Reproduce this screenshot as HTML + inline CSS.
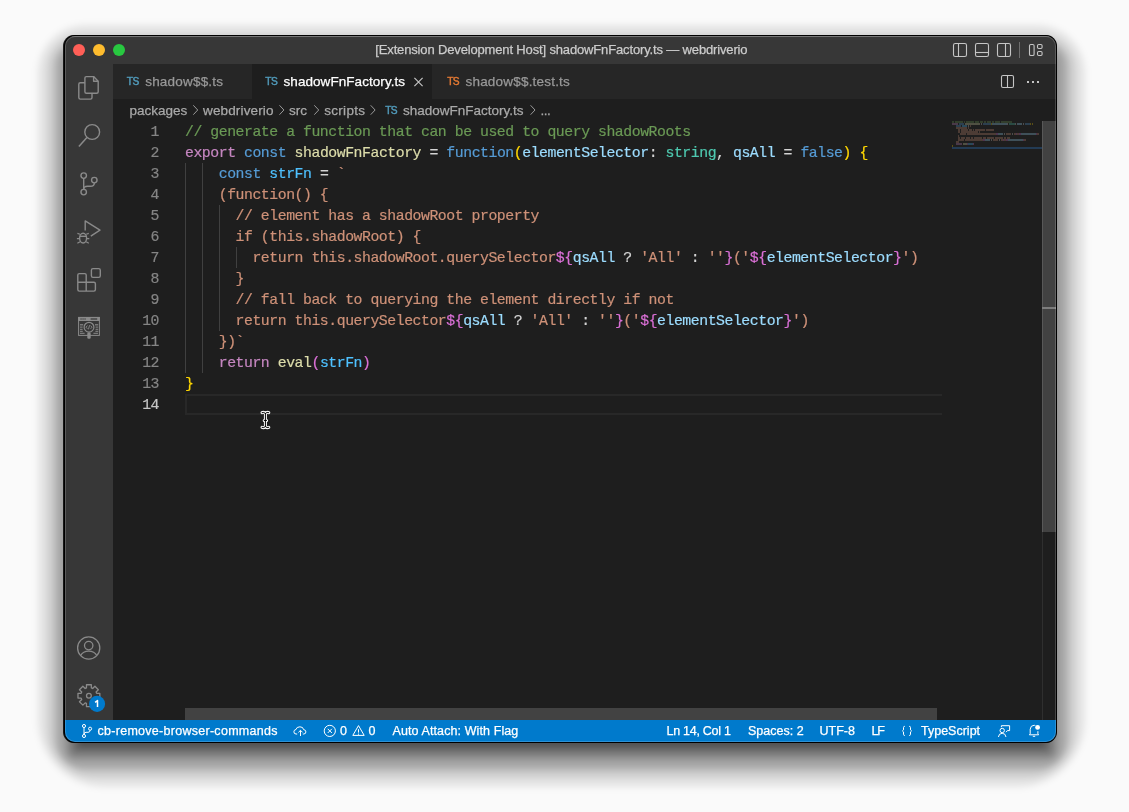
<!DOCTYPE html>
<html><head><meta charset="utf-8">
<style>
html,body{margin:0;padding:0;}
body{width:1129px;height:812px;background:#fafafa;position:relative;overflow:hidden;font-family:"Liberation Sans",sans-serif;}
.abs{position:absolute;}
#frame{position:absolute;left:64px;top:35px;width:993px;height:708px;border-radius:11px;background:#000;
 box-shadow:-1px 0 0 0 rgba(0,0,0,0.85);}
#clip{position:absolute;left:65px;top:36px;width:991px;height:706px;border-radius:10px;overflow:hidden;background:#1e1e1e;}
#inner{will-change:transform;position:absolute;left:-65px;top:-36px;width:1129px;height:812px;}
#hl{position:absolute;left:65px;top:36px;width:991px;height:706px;border-radius:10px;box-shadow:inset 0 0 0 1px rgba(255,255,255,0.18);pointer-events:none;}

.tl{position:absolute;top:44px;width:12px;height:12px;border-radius:50%;}
.ui{font-family:"Liberation Sans",sans-serif;white-space:pre;-webkit-text-stroke:0.25px currentColor;}
.code{will-change:transform;margin-top:-0.2px;-webkit-text-stroke:0.2px currentColor;font-family:"Liberation Mono",monospace;font-size:14.8px;letter-spacing:-0.451px;white-space:pre;position:absolute;left:185px;height:21px;line-height:21px;color:#d4d4d4;}
.ln{will-change:transform;margin-top:-0.2px;-webkit-text-stroke:0.2px currentColor;font-family:"Liberation Mono",monospace;font-size:14.8px;letter-spacing:-0.451px;position:absolute;left:113px;width:46px;text-align:right;height:21px;line-height:21px;color:#858585;}
.ig{position:absolute;width:1px;background:#404040;}
.ts{font-family:"Liberation Sans",sans-serif;font-size:10.2px;line-height:12px;letter-spacing:-0.55px;font-weight:normal;-webkit-text-stroke:0.45px currentColor !important;}
.tabt{top:74px;font-size:13.5px;line-height:16px;}
.bc{top:103px;font-size:13.5px;line-height:16px;color:#a9a9a9;}
.sb{top:724px;font-size:12.5px;line-height:15px;color:#ffffff;}
.shl{position:absolute;}
</style></head>
<body>
<div id="shadow" style="position:absolute;left:1px;top:0;width:1129px;height:812px;filter:blur(3.0px);"><div class="shl" style="left:35.0px;top:23.2px;width:1051.0px;height:766.0px;border-radius:50.6px 50.6px 70.9px 70.9px;background:rgba(0,0,0,0.0284);"></div><div class="shl" style="left:38.0px;top:26.2px;width:1045.0px;height:760.0px;border-radius:46.4px 46.4px 64.6px 64.6px;background:rgba(0,0,0,0.0631);"></div><div class="shl" style="left:44.0px;top:32.2px;width:1033.0px;height:748.0px;border-radius:38.0px 38.0px 52.0px 52.0px;background:rgba(0,0,0,0.0251);"></div><div class="shl" style="left:47.0px;top:35.2px;width:1027.0px;height:742.0px;border-radius:33.8px 33.8px 45.7px 45.7px;background:rgba(0,0,0,0.0876);"></div><div class="shl" style="left:53.0px;top:41.2px;width:1015.0px;height:730.0px;border-radius:25.4px 25.4px 33.1px 33.1px;background:rgba(0,0,0,0.0874);"></div><div class="shl" style="left:56.0px;top:44.2px;width:1009.0px;height:724.0px;border-radius:21.2px 21.2px 26.8px 26.8px;background:rgba(0,0,0,0.0957);"></div><div class="shl" style="left:59.0px;top:47.2px;width:1003.0px;height:718.0px;border-radius:17.0px 17.0px 20.5px 20.5px;background:rgba(0,0,0,0.0402);"></div><div class="shl" style="left:65.0px;top:53.2px;width:991.0px;height:706.0px;border-radius:9.0px 9.0px 9.0px 9.0px;background:rgba(0,0,0,0.1695);"></div><div class="shl" style="left:71.0px;top:59.2px;width:979.0px;height:694.0px;border-radius:3.0px 3.0px 3.0px 3.0px;background:rgba(0,0,0,0.2138);"></div><div class="shl" style="left:77.0px;top:65.2px;width:967.0px;height:682.0px;border-radius:2.0px 2.0px 2.0px 2.0px;background:rgba(0,0,0,0.2523);"></div></div>
<div id="frame"></div>
<div id="clip"><div id="inner">
  <!-- title bar -->
  <div class="abs" style="left:65px;top:36px;width:991px;height:28px;background:#373737;"></div>
  <div class="tl" style="left:73px;background:#ff5f57;"></div>
  <div class="tl" style="left:93px;background:#febc2e;"></div>
  <div class="tl" style="left:113px;background:#28c840;"></div>
  <div class="abs ui" id="title" style="left:375.3px;top:42px;font-size:13px;letter-spacing:-0.15px;line-height:16px;color:#cccccc;">[Extension Development Host] shadowFnFactory.ts — webdriverio</div>

  <!-- activity bar -->
  <div class="abs" style="left:65px;top:64px;width:48px;height:656px;background:#373737;"></div>

  <!-- tab bar -->
  <div class="abs" style="left:113px;top:64px;width:943px;height:35px;background:#262626;"></div>
    <div class="abs" style="left:252px;top:64px;width:180px;height:35px;background:#1e1e1e;"></div>
  
  <!-- breadcrumbs / editor -->
  <div class="abs" style="left:113px;top:99px;width:943px;height:621px;background:#1e1e1e;"></div>


  <!-- indent guides -->
  <div class="ig" style="left:185px;top:163px;height:210px;"></div>
  <div class="ig" style="left:202px;top:163px;height:210px;"></div>
  <div class="ig" style="left:219px;top:205px;height:126px;"></div>
  <div class="ig" style="left:236px;top:247px;height:21px;"></div>
  <!-- current line -->
  <div class="abs" style="left:185px;top:394px;width:755px;height:17px;border:2px solid #282828;border-right:none;"></div>
<div class="ln" style="top:122px;">1</div>
<div class="code" style="top:122px"><span style="color:#6a9955">// generate a function that can be used to query shadowRoots</span></div>
<div class="ln" style="top:143px;">2</div>
<div class="code" style="top:143px"><span style="color:#c586c0">export</span><span style="color:#d4d4d4"> </span><span style="color:#569cd6">const</span><span style="color:#d4d4d4"> </span><span style="color:#dcdcaa">shadowFnFactory</span><span style="color:#d4d4d4"> = </span><span style="color:#569cd6">function</span><span style="color:#ffd700">(</span><span style="color:#9cdcfe">elementSelector</span><span style="color:#d4d4d4">: </span><span style="color:#4ec9b0">string</span><span style="color:#d4d4d4">, </span><span style="color:#9cdcfe">qsAll</span><span style="color:#d4d4d4"> = </span><span style="color:#569cd6">false</span><span style="color:#ffd700">)</span><span style="color:#d4d4d4"> </span><span style="color:#ffd700">{</span></div>
<div class="ln" style="top:164px;">3</div>
<div class="code" style="top:164px"><span style="color:#d4d4d4">    </span><span style="color:#569cd6">const</span><span style="color:#d4d4d4"> </span><span style="color:#4fc1ff">strFn</span><span style="color:#d4d4d4"> = </span><span style="color:#ce9178">`</span></div>
<div class="ln" style="top:185px;">4</div>
<div class="code" style="top:185px"><span style="color:#ce9178">    (function() {</span></div>
<div class="ln" style="top:206px;">5</div>
<div class="code" style="top:206px"><span style="color:#ce9178">      // element has a shadowRoot property</span></div>
<div class="ln" style="top:227px;">6</div>
<div class="code" style="top:227px"><span style="color:#ce9178">      if (this.shadowRoot) {</span></div>
<div class="ln" style="top:248px;">7</div>
<div class="code" style="top:248px"><span style="color:#ce9178">        return this.shadowRoot.querySelector</span><span style="color:#da70d6">${</span><span style="color:#9cdcfe">qsAll</span><span style="color:#d4d4d4"> ? </span><span style="color:#ce9178">&#x27;All&#x27;</span><span style="color:#d4d4d4"> : </span><span style="color:#ce9178">&#x27;&#x27;</span><span style="color:#da70d6">}</span><span style="color:#ce9178">(&#x27;</span><span style="color:#da70d6">${</span><span style="color:#9cdcfe">elementSelector</span><span style="color:#da70d6">}</span><span style="color:#ce9178">&#x27;)</span></div>
<div class="ln" style="top:269px;">8</div>
<div class="code" style="top:269px"><span style="color:#ce9178">      }</span></div>
<div class="ln" style="top:290px;">9</div>
<div class="code" style="top:290px"><span style="color:#ce9178">      // fall back to querying the element directly if not</span></div>
<div class="ln" style="top:311px;">10</div>
<div class="code" style="top:311px"><span style="color:#ce9178">      return this.querySelector</span><span style="color:#da70d6">${</span><span style="color:#9cdcfe">qsAll</span><span style="color:#d4d4d4"> ? </span><span style="color:#ce9178">&#x27;All&#x27;</span><span style="color:#d4d4d4"> : </span><span style="color:#ce9178">&#x27;&#x27;</span><span style="color:#da70d6">}</span><span style="color:#ce9178">(&#x27;</span><span style="color:#da70d6">${</span><span style="color:#9cdcfe">elementSelector</span><span style="color:#da70d6">}</span><span style="color:#ce9178">&#x27;)</span></div>
<div class="ln" style="top:332px;">11</div>
<div class="code" style="top:332px"><span style="color:#ce9178">    })`</span></div>
<div class="ln" style="top:353px;">12</div>
<div class="code" style="top:353px"><span style="color:#d4d4d4">    </span><span style="color:#c586c0">return</span><span style="color:#d4d4d4"> </span><span style="color:#dcdcaa">eval</span><span style="color:#da70d6">(</span><span style="color:#4fc1ff">strFn</span><span style="color:#da70d6">)</span></div>
<div class="ln" style="top:374px;">13</div>
<div class="code" style="top:374px"><span style="color:#ffd700">}</span></div>
<div class="ln" style="top:395px;color:#c6c6c6;">14</div>
<div class="code" style="top:395px"></div>

  <!-- status bar -->
  <div class="abs" style="left:65px;top:720px;width:991px;height:22px;background:#007acc;"></div>
  <!-- tabs text -->
  <div class="abs ui ts" style="left:126.8px;top:76.2px;color:#519aba;">TS</div>
  <div class="abs ui tabt" style="left:145.2px;color:#999999;letter-spacing:0.2px;">shadow$$.ts</div>
  <div class="abs ui ts" style="left:265.3px;top:76.2px;color:#519aba;">TS</div>
  <div class="abs ui tabt" style="left:283.5px;color:#ffffff;letter-spacing:0.06px;">shadowFnFactory.ts</div>
  <div class="abs ui ts" style="left:447.2px;top:76.2px;color:#e37933;">TS</div>
  <div class="abs ui tabt" style="left:465.5px;color:#999999;letter-spacing:0.2px;">shadow$$.test.ts</div>

  <!-- breadcrumbs -->
  <div class="abs ui bc" style="left:129.5px;">packages</div>
  <div class="abs ui bc" style="left:203px;letter-spacing:0.15px;">webdriverio</div>
  <div class="abs ui bc" style="left:289px;">src</div>
  <div class="abs ui bc" style="left:324.2px;letter-spacing:0.3px;">scripts</div>
  <div class="abs ui ts" style="left:385.2px;top:104.6px;color:#519aba;">TS</div>
  <div class="abs ui bc" style="left:403px;">shadowFnFactory.ts</div>
  <div class="abs ui bc" style="left:540.6px;letter-spacing:-0.6px;">...</div>

  <!-- status bar text -->
  <div class="abs ui sb" style="left:97.5px;letter-spacing:0.28px;">cb-remove-browser-commands</div>
  <div class="abs ui sb" style="left:340px;">0</div>
  <div class="abs ui sb" style="left:368.5px;">0</div>
  <div class="abs ui sb" style="left:392.5px;letter-spacing:0.1px;">Auto Attach: With Flag</div>
  <div class="abs ui sb" style="left:666.5px;letter-spacing:-0.27px;">Ln 14, Col 1</div>
  <div class="abs ui sb" style="left:748px;">Spaces: 2</div>
  <div class="abs ui sb" style="left:819.5px;">UTF-8</div>
  <div class="abs ui sb" style="left:871.5px;letter-spacing:-1.2px;">LF</div>
  <div class="abs ui sb" style="left:921px;">TypeScript</div>

  <!-- minimap -->
  <svg class="abs" style="left:0;top:0;" width="1129" height="812"><rect x="952" y="147" width="90" height="2" fill="#264f78" opacity="0.6"/><g opacity="0.33"><rect x="952" y="121.2" width="2" height="1.6" fill="#6a9955"/><rect x="955" y="121.2" width="8" height="1.6" fill="#6a9955"/><rect x="964" y="121.2" width="1" height="1.6" fill="#6a9955"/><rect x="966" y="121.2" width="8" height="1.6" fill="#6a9955"/><rect x="975" y="121.2" width="4" height="1.6" fill="#6a9955"/><rect x="980" y="121.2" width="3" height="1.6" fill="#6a9955"/><rect x="984" y="121.2" width="2" height="1.6" fill="#6a9955"/><rect x="987" y="121.2" width="4" height="1.6" fill="#6a9955"/><rect x="992" y="121.2" width="2" height="1.6" fill="#6a9955"/><rect x="995" y="121.2" width="5" height="1.6" fill="#6a9955"/><rect x="1001" y="121.2" width="11" height="1.6" fill="#6a9955"/><rect x="952" y="123.2" width="6" height="1.6" fill="#c586c0"/><rect x="959" y="123.2" width="5" height="1.6" fill="#569cd6"/><rect x="965" y="123.2" width="15" height="1.6" fill="#dcdcaa"/><rect x="981" y="123.2" width="1" height="1.6" fill="#d4d4d4"/><rect x="983" y="123.2" width="8" height="1.6" fill="#569cd6"/><rect x="991" y="123.2" width="1" height="1.6" fill="#ffd700"/><rect x="992" y="123.2" width="15" height="1.6" fill="#9cdcfe"/><rect x="1007" y="123.2" width="1" height="1.6" fill="#d4d4d4"/><rect x="1009" y="123.2" width="6" height="1.6" fill="#4ec9b0"/><rect x="1015" y="123.2" width="1" height="1.6" fill="#d4d4d4"/><rect x="1017" y="123.2" width="5" height="1.6" fill="#9cdcfe"/><rect x="1023" y="123.2" width="1" height="1.6" fill="#d4d4d4"/><rect x="1025" y="123.2" width="5" height="1.6" fill="#569cd6"/><rect x="1030" y="123.2" width="1" height="1.6" fill="#ffd700"/><rect x="1032" y="123.2" width="1" height="1.6" fill="#ffd700"/><rect x="956" y="125.2" width="5" height="1.6" fill="#569cd6"/><rect x="962" y="125.2" width="5" height="1.6" fill="#4fc1ff"/><rect x="968" y="125.2" width="1" height="1.6" fill="#d4d4d4"/><rect x="970" y="125.2" width="1" height="1.6" fill="#ce9178"/><rect x="956" y="127.2" width="11" height="1.6" fill="#ce9178"/><rect x="968" y="127.2" width="1" height="1.6" fill="#ce9178"/><rect x="958" y="129.2" width="2" height="1.6" fill="#ce9178"/><rect x="961" y="129.2" width="7" height="1.6" fill="#ce9178"/><rect x="969" y="129.2" width="3" height="1.6" fill="#ce9178"/><rect x="973" y="129.2" width="1" height="1.6" fill="#ce9178"/><rect x="975" y="129.2" width="10" height="1.6" fill="#ce9178"/><rect x="986" y="129.2" width="8" height="1.6" fill="#ce9178"/><rect x="958" y="131.2" width="2" height="1.6" fill="#ce9178"/><rect x="961" y="131.2" width="17" height="1.6" fill="#ce9178"/><rect x="979" y="131.2" width="1" height="1.6" fill="#ce9178"/><rect x="960" y="133.2" width="6" height="1.6" fill="#ce9178"/><rect x="967" y="133.2" width="29" height="1.6" fill="#ce9178"/><rect x="996" y="133.2" width="2" height="1.6" fill="#da70d6"/><rect x="998" y="133.2" width="5" height="1.6" fill="#9cdcfe"/><rect x="1004" y="133.2" width="1" height="1.6" fill="#d4d4d4"/><rect x="1006" y="133.2" width="5" height="1.6" fill="#ce9178"/><rect x="1012" y="133.2" width="1" height="1.6" fill="#d4d4d4"/><rect x="1014" y="133.2" width="2" height="1.6" fill="#ce9178"/><rect x="1016" y="133.2" width="1" height="1.6" fill="#da70d6"/><rect x="1017" y="133.2" width="2" height="1.6" fill="#ce9178"/><rect x="1019" y="133.2" width="2" height="1.6" fill="#da70d6"/><rect x="1021" y="133.2" width="15" height="1.6" fill="#9cdcfe"/><rect x="1036" y="133.2" width="1" height="1.6" fill="#da70d6"/><rect x="1037" y="133.2" width="2" height="1.6" fill="#ce9178"/><rect x="958" y="135.2" width="1" height="1.6" fill="#ce9178"/><rect x="958" y="137.2" width="2" height="1.6" fill="#ce9178"/><rect x="961" y="137.2" width="4" height="1.6" fill="#ce9178"/><rect x="966" y="137.2" width="4" height="1.6" fill="#ce9178"/><rect x="971" y="137.2" width="2" height="1.6" fill="#ce9178"/><rect x="974" y="137.2" width="8" height="1.6" fill="#ce9178"/><rect x="983" y="137.2" width="3" height="1.6" fill="#ce9178"/><rect x="987" y="137.2" width="7" height="1.6" fill="#ce9178"/><rect x="995" y="137.2" width="8" height="1.6" fill="#ce9178"/><rect x="1004" y="137.2" width="2" height="1.6" fill="#ce9178"/><rect x="1007" y="137.2" width="3" height="1.6" fill="#ce9178"/><rect x="958" y="139.2" width="6" height="1.6" fill="#ce9178"/><rect x="965" y="139.2" width="18" height="1.6" fill="#ce9178"/><rect x="983" y="139.2" width="2" height="1.6" fill="#da70d6"/><rect x="985" y="139.2" width="5" height="1.6" fill="#9cdcfe"/><rect x="991" y="139.2" width="1" height="1.6" fill="#d4d4d4"/><rect x="993" y="139.2" width="5" height="1.6" fill="#ce9178"/><rect x="999" y="139.2" width="1" height="1.6" fill="#d4d4d4"/><rect x="1001" y="139.2" width="2" height="1.6" fill="#ce9178"/><rect x="1003" y="139.2" width="1" height="1.6" fill="#da70d6"/><rect x="1004" y="139.2" width="2" height="1.6" fill="#ce9178"/><rect x="1006" y="139.2" width="2" height="1.6" fill="#da70d6"/><rect x="1008" y="139.2" width="15" height="1.6" fill="#9cdcfe"/><rect x="1023" y="139.2" width="1" height="1.6" fill="#da70d6"/><rect x="1024" y="139.2" width="2" height="1.6" fill="#ce9178"/><rect x="956" y="141.2" width="3" height="1.6" fill="#ce9178"/><rect x="956" y="143.2" width="6" height="1.6" fill="#c586c0"/><rect x="963" y="143.2" width="4" height="1.6" fill="#dcdcaa"/><rect x="967" y="143.2" width="1" height="1.6" fill="#da70d6"/><rect x="968" y="143.2" width="5" height="1.6" fill="#4fc1ff"/><rect x="973" y="143.2" width="1" height="1.6" fill="#da70d6"/><rect x="952" y="145.2" width="1" height="1.6" fill="#ffd700"/></g></svg>
  <!-- scrollbars -->
  <div class="abs" style="left:1042px;top:121px;width:1px;height:599px;background:#2f2f2f;"></div>
  <div class="abs" style="left:1042px;top:121px;width:14px;height:411px;background:rgba(121,121,121,0.4);"></div>
  <div class="abs" style="left:1042px;top:121px;width:1px;height:411px;background:rgba(255,255,255,0.07);"></div>
  <div class="abs" style="left:1042px;top:307px;width:14px;height:2px;background:#7d7d7d;"></div>
  <div class="abs" style="left:185px;top:708px;width:752px;height:12px;background:rgba(121,121,121,0.4);"></div>
  <!-- icons overlay -->
  <svg class="abs" style="left:0;top:0;" width="1129" height="812" viewBox="0 0 1129 812">
   <g fill="none" stroke="#c5c5c5" stroke-width="1.1">
    <!-- layout controls -->
    <rect x="953.5" y="43.5" width="13" height="13" rx="1.8"/><line x1="958.5" y1="43.5" x2="958.5" y2="56.5"/>
    <rect x="975.5" y="43.5" width="13" height="13" rx="1.8"/><line x1="975.5" y1="52.5" x2="988.5" y2="52.5"/>
    <rect x="997.5" y="43.5" width="13" height="13" rx="1.8"/><line x1="1005.5" y1="43.5" x2="1005.5" y2="56.5"/>
    <rect x="1029.5" y="44.5" width="4.6" height="11" rx="1.3"/>
    <rect x="1037.5" y="44.5" width="4.6" height="4" rx="1.2"/><rect x="1037.5" y="51.5" width="4.6" height="4" rx="1.2"/>
    <!-- editor actions: split -->
    <rect x="1001.5" y="75.5" width="12" height="12" rx="1.5"/><line x1="1007.5" y1="75.5" x2="1007.5" y2="87.5"/>
    <!-- tab close -->
    <path d="M414.4 77.9 L422.6 86.1 M422.6 77.9 L414.4 86.1" stroke-width="1.15"/>
   </g>
   <line x1="1019.5" y1="42" x2="1019.5" y2="58" stroke="#6e6e6e" stroke-width="1"/>
   <g fill="#c5c5c5"><rect x="1027" y="81" width="2" height="2"/><rect x="1032" y="81" width="2" height="2"/><rect x="1037" y="81" width="2" height="2"/></g>
   <!-- breadcrumb chevrons -->
   <g fill="none" stroke="#9a9a9a" stroke-width="1">
    <path d="M193.3 105.3 L197.7 110 L193.3 114.7"/>
    <path d="M279.5 105.3 L283.9 110 L279.5 114.7"/>
    <path d="M314.3 105.3 L318.7 110 L314.3 114.7"/>
    <path d="M370.7 105.3 L375.1 110 L370.7 114.7"/>
    <path d="M530.6 105.3 L535 110 L530.6 114.7"/>
   </g>
   <!-- activity bar icons -->
   <g fill="none" stroke="#8a8a8a" stroke-width="1.4" stroke-linejoin="round">
    <!-- files -->
    <path d="M86.4 76.6 H93.6 L98.2 81.2 V91.7 Q98.2 93.2 96.7 93.2 H86.4 Q84.9 93.2 84.9 91.7 V78.1 Q84.9 76.6 86.4 76.6 Z"/>
    <path d="M93.6 76.6 V81.2 H98.2"/>
    <path d="M84.9 82.7 H80.3 Q78.8 82.7 78.8 84.2 V97.6 Q78.8 99.1 80.3 99.1 H90.5 Q92 99.1 92 97.6 V93.2"/>
    <!-- search -->
    <circle cx="92.2" cy="132" r="7.4"/>
    <path d="M86.9 137.4 L78.9 146.6" stroke-width="1.5"/>
    <!-- source control -->
    <circle cx="83.7" cy="175.6" r="2.75"/>
    <circle cx="83.7" cy="192.1" r="2.75"/>
    <circle cx="94.3" cy="180.1" r="2.75"/>
    <path d="M83.7 178.4 V189.3"/>
    <path d="M94.3 182.9 Q94.3 186.2 90.5 186.2 H87.5 Q83.7 186.2 83.7 189.3"/>
    <!-- run and debug -->
    <path d="M85.2 230.4 V220.9 L100 230.2 L90.8 236.2"/>
    <ellipse cx="83.1" cy="238.1" rx="3.5" ry="4.9"/>
    <path d="M79.9 236.3 H86.3"/>
    <path d="M80 234.3 L77.4 233.4 M79.6 238.7 H76.9 M80 241.7 L77.4 243.3 M86.2 234.3 L88.8 233.4 M86.6 238.7 H89.3 M86.2 241.7 L88.8 243.3" stroke-width="1.2"/>
    <!-- extensions -->
    <path d="M79.3 273.6 H84.7 Q86.2 273.6 86.2 275.1 V282.3 H93.9 Q95.4 282.3 95.4 283.8 V289.6 Q95.4 291.1 93.9 291.1 H79.3 Q77.8 291.1 77.8 289.6 V275.1 Q77.8 273.6 79.3 273.6 Z"/>
    <path d="M77.8 282.3 H86.2 V291.1"/>
    <rect x="91.4" y="268.6" width="8.9" height="8.8" rx="1.6"/>
    <!-- accounts -->
    <circle cx="88.7" cy="648" r="11.1" stroke-width="1.3"/>
    <circle cx="88.7" cy="645.6" r="4.2" stroke-width="1.3"/>
    <path d="M80.6 655.6 Q83 651.1 88.7 651.1 Q94.4 651.1 96.8 655.6" stroke-width="1.3"/>
    <!-- gear -->
    <circle cx="88.9" cy="695.7" r="2.4" stroke-width="1.3"/>
   </g>
   <path id="gear" fill="none" stroke="#8a8a8a" stroke-width="1.3" stroke-linejoin="round" d="M86.46 687.97 L86.48 684.77 L91.32 684.77 L91.34 687.97 L92.64 688.52 L94.92 686.25 L98.35 689.68 L96.08 691.96 L96.63 693.26 L99.83 693.28 L99.83 698.12 L96.63 698.14 L96.08 699.44 L98.35 701.72 L94.92 705.15 L92.64 702.88 L91.34 703.43 L91.32 706.63 L86.48 706.63 L86.46 703.43 L85.16 702.88 L82.88 705.15 L79.45 701.72 L81.72 699.44 L81.17 698.14 L77.97 698.12 L77.97 693.28 L81.17 693.26 L81.72 691.96 L79.45 689.68 L82.88 686.25 L85.16 688.52 Z"/>
   <!-- webdriverio-ish extension icon -->
   <g fill="none" stroke="#8a8a8a" stroke-width="1.2">
    <rect x="78.6" y="317.4" width="20.8" height="18" stroke-width="1"/>
   </g>
   <g fill="#8a8a8a">
    <rect x="78.2" y="317" width="21.5" height="4"/>
    <rect x="80" y="324.2" width="3.2" height="1.2"/><rect x="80" y="326.6" width="2.6" height="1"/><rect x="80" y="328.8" width="2.6" height="1"/><rect x="80" y="330.8" width="2.8" height="1"/><rect x="80" y="332.8" width="4.6" height="1"/>
    <rect x="95" y="324.2" width="3.2" height="1.2"/><rect x="95.6" y="326.6" width="2.6" height="1"/><rect x="95.6" y="328.8" width="2.6" height="1"/><rect x="95.4" y="330.8" width="2.8" height="1"/><rect x="93.4" y="332.8" width="4.6" height="1"/>
    <rect x="87.3" y="332.5" width="3.4" height="6.3" rx="1.2"/>
   </g>
   <g fill="#4a4a4a"><rect x="80.4" y="318.3" width="1.3" height="1.4"/><rect x="82.4" y="318.3" width="1.3" height="1.4"/><rect x="84.4" y="318.3" width="1.3" height="1.4"/><rect x="90.6" y="318.2" width="6.6" height="1.6"/></g>
   <circle cx="89" cy="327.2" r="4.9" fill="#373737" stroke="#8a8a8a" stroke-width="1.2"/>
   <path d="M87.4 325.6 L86 327.2 L87.4 328.8 M90.6 325.6 L92 327.2 L90.6 328.8 M89.6 325.2 L88.4 329.4" fill="none" stroke="#8a8a8a" stroke-width="0.9"/>
   <!-- badge -->
   <circle cx="97.05" cy="703.9" r="8.05" fill="#007acc"/>
   <path d="M97.5 706.9 V700.6 L95.1 702.3" fill="none" stroke="#ffffff" stroke-width="1.5" stroke-linejoin="round"/>
   <!-- status bar icons -->
   <g fill="none" stroke="#ffffff" stroke-width="1">
    <circle cx="84" cy="726" r="1.55"/><circle cx="84" cy="736" r="1.55"/><circle cx="90.1" cy="728.7" r="1.55"/>
    <path d="M84 727.6 V734.4"/><path d="M90.1 730.3 Q90.1 732.3 88 732.3 H86 Q84 732.3 84 734.4"/>
    <!-- cloud upload -->
    <path d="M297.2 734 H296 Q293.9 734 293.9 731.8 Q293.9 729.7 296 729.5 Q296.5 726.8 299.9 726.8 Q303.2 726.8 303.6 729.6 Q305.9 729.8 305.9 731.9 Q305.9 734 303.7 734 H302.8"/>
    <path d="M300.5 736 V730.4 M298.4 732.4 L300.5 730.3 L302.6 732.4"/>
    <!-- error -->
    <circle cx="329.8" cy="730.9" r="5.6"/>
    <path d="M327.7 728.8 L331.9 733 M331.9 728.8 L327.7 733"/>
    <!-- warning -->
    <path d="M358.5 725.6 L364.2 735.4 H352.8 Z" stroke-linejoin="round"/>
    <path d="M358.5 729.2 V732.6"/>
    <!-- braces -->
    <path d="M904.8 726.3 Q903.5 726.3 903.5 727.5 V729.9 L902.4 730.9 L903.5 731.9 V734.3 Q903.5 735.5 904.8 735.5"/>
    <path d="M909.2 726.3 Q910.5 726.3 910.5 727.5 V729.9 L911.6 730.9 L910.5 731.9 V734.3 Q910.5 735.5 909.2 735.5"/>
    <!-- feedback -->
    <path d="M1001.4 727.2 V725.7 H1009.6 V730.6 H1007.4 L1006 732.2"/>
    <circle cx="1002.2" cy="730.5" r="2.2"/>
    <path d="M998.4 737 Q998.8 733.3 1002.2 733.3 Q1005.6 733.3 1006 737"/>
    <!-- bell -->
    <path d="M1035.3 725.6 Q1034.7 725.3 1034 725.3 Q1030.6 725.3 1030.2 729.2 V733.9 L1029.4 734.8 H1038.6 L1037.9 733.9 V731.2"/>
    <path d="M1032.8 736.3 H1035.2"/>
   </g>
   <circle cx="1037.6" cy="727.4" r="2.4" fill="#ffffff"/>
   <rect x="358" y="733.6" width="1" height="1.1" fill="#ffffff"/>
   <!-- mouse I-beam -->
   <g fill="none" stroke-linecap="round">
    <path d="M262 412.6 Q263.8 411.8 265.4 413.4 Q267 411.8 268.8 412.6 M265.4 413.4 V426.6 M262 427.4 Q263.8 428.2 265.4 426.6 Q267 428.2 268.8 427.4 M264.2 420.4 H266.6" stroke="#ffffff" stroke-width="3"/>
    <path d="M262 412.6 Q263.8 411.8 265.4 413.4 Q267 411.8 268.8 412.6 M265.4 413.4 V426.6 M262 427.4 Q263.8 428.2 265.4 426.6 Q267 428.2 268.8 427.4 M264.2 420.4 H266.6" stroke="#000000" stroke-width="1"/>
   </g>
  </svg>
  

  <!-- END -->
</div></div>
<div id="hl"></div>
<div class="abs" style="left:72px;top:36px;width:977px;height:1px;background:rgba(255,255,255,0.17);"></div>
</body></html>
